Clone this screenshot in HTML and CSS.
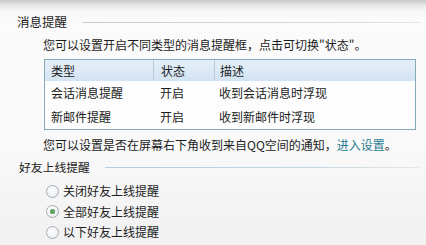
FILE: index.html
```html
<!DOCTYPE html>
<html lang="zh-CN">
<head>
<meta charset="utf-8">
<title>消息提醒</title>
<link rel="stylesheet" href="styles.css">
</head>
<body>
<div class="page">
  <div class="section-title first"><span class="title-text big">消息提醒</span><span class="rule"></span></div>
  <p class="desc first-desc">您可以设置开启不同类型的消息提醒框，点击可切换"状态"。</p>
  <div class="table">
    <div class="row head">
      <div class="cell c1">类型</div>
      <div class="cell c2">状态</div>
      <div class="cell c3">描述</div>
    </div>
    <div class="row">
      <div class="cell c1">会话消息提醒</div>
      <div class="cell c2">开启</div>
      <div class="cell c3">收到会话消息时浮现</div>
    </div>
    <div class="row">
      <div class="cell c1">新邮件提醒</div>
      <div class="cell c2">开启</div>
      <div class="cell c3">收到新邮件时浮现</div>
    </div>
  </div>
  <p class="desc second-desc">您可以设置是否在屏幕右下角收到来自QQ空间的通知，<a class="link">进入设置</a>。</p>
  <div class="section-title second"><span class="title-text">好友上线提醒</span><span class="rule"></span></div>
  <div class="radios">
    <label class="radio"><span class="dot"></span><span>关闭好友上线提醒</span></label>
    <label class="radio"><span class="dot checked"></span><span>全部好友上线提醒</span></label>
    <label class="radio"><span class="dot"></span><span>以下好友上线提醒</span></label>
  </div>
</div>
</body>
</html>
```
FILE: styles.css
```css
html, body {
  margin: 0;
  padding: 0;
}
body {
  width: 426px;
  height: 245px;
  overflow: hidden;
  font-family: "Noto Sans CJK SC", "Liberation Sans", sans-serif;
  font-size: 12px;
  color: #1c1c1c;
  background: linear-gradient(to bottom, #c9c9c9 0px, #e6e6e6 5px, #f6f6f6 11px, #fbfbfb 20px, #f9f9f9 150px, #f1f1f1 245px);
}
.page {
  padding-top: 14px;
}
.section-title {
  display: flex;
  align-items: center;
  height: 16px;
  padding-left: 17px;
  padding-right: 6px;
}
.section-title.second {
  padding-left: 19px;
  margin-top: 6px;
}
.title-text {
  line-height: 16px;
  white-space: nowrap;
  font-size: 11.8px;
}
.title-text.big {
  font-size: 12.5px;
}
.rule {
  flex: 1;
  height: 1px;
  margin-left: 15px;
  background: linear-gradient(to right, #c4ced6, #cdd9e2 60%, #dfe6eb);
}
.second .rule {
  background: linear-gradient(to right, #b8ccd9, #c8d7e1 70%, #e4eaee);
}
.desc {
  margin: 0;
  padding-left: 43px;
  line-height: 16px;
  white-space: nowrap;
}
.first-desc {
  margin-top: 7px;
}
.second-desc {
  margin-top: 7px;
}
.link {
  color: #2a7c91;
  text-decoration: none;
}
.table {
  margin: 6px 10px 0 44px;
  border: 1px solid #86a9b8;
  background: #fdfdfe;
}
.row {
  display: flex;
  height: 24px;
  align-items: center;
}
.row.head {
  height: 21px;
  background: linear-gradient(to bottom, #e6eff9, #d3e3f3);
}
.cell {
  line-height: 16px;
  white-space: nowrap;
  box-sizing: border-box;
}
.c1 {
  width: 108px;
  padding-left: 6px;
}
.c2 {
  width: 61px;
  padding-left: 7px;
}
.c3 {
  flex: 1;
  padding-left: 5px;
}
.head .cell {
  height: 21px;
  line-height: 21px;
}
.head .c2, .head .c3 {
  border-left: 1px solid #b9cbdb;
}
.radios {
  margin-top: 6px;
  padding-left: 46px;
}
.radio {
  display: flex;
  align-items: center;
  height: 20.5px;
  line-height: 16px;
}
.dot {
  width: 13px;
  height: 13px;
  box-sizing: border-box;
  border: 1px solid #a5acb3;
  border-radius: 50%;
  background: radial-gradient(circle at 40% 35%, #ffffff 0%, #f3f5f7 50%, #dfe4e8 100%);
  margin-right: 4px;
  display: flex;
  align-items: center;
  justify-content: center;
}
.dot.checked::after {
  content: "";
  width: 5px;
  height: 5px;
  border-radius: 50%;
  background: radial-gradient(circle, #6fb06a, #3f8a3c);
}
```
